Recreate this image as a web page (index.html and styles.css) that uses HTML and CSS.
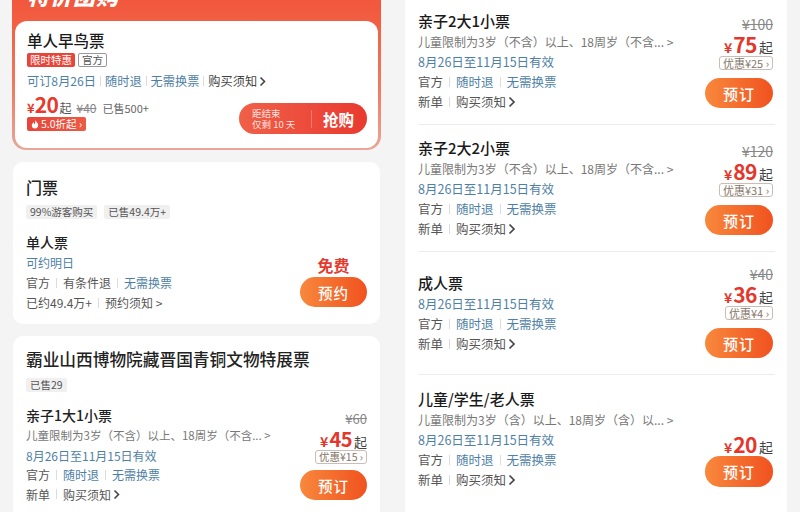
FILE: index.html
```html
<!DOCTYPE html>
<html lang="zh-CN">
<head>
<meta charset="utf-8">
<title>票务</title>
<link rel="stylesheet" href="styles.css">
</head>
<body>
<div class="page">
  <div class="col-left">
    <section class="promo">
      <div class="promo-head">特价团购</div>
      <div class="promo-card">
        <div class="p-title">单人早鸟票</div>
        <div class="tags">
          <span class="tag tag-red">限时特惠</span>
          <span class="tag tag-line">官方</span>
        </div>
        <div class="info info-p">
          <span class="blue">可订8月26日</span><span class="sep"></span><span class="blue">随时退</span><span class="sep"></span><span class="blue">无需换票</span><span class="sep"></span><span class="dark">购买须知</span><svg class="chev" width="7" height="11" viewBox="0 0 7 11"><path d="M1.5 1.5 L5.5 5.5 L1.5 9.5" fill="none" stroke="#444" stroke-width="1.6"/></svg>
        </div>
        <div class="promo-bottom">
          <div class="promo-left">
            <div class="pprice">
              <span class="yen">¥</span><span class="num">20</span><span class="qi">起</span>
              <span class="old">¥40</span>
              <span class="sold">已售500+</span>
            </div>
            <span class="discount"><svg width="8" height="10" viewBox="0 0 8 10"><path d="M4 0.5 C4.6 2.6 7.4 3.8 7.2 6.6 C7 8.6 5.6 9.6 4 9.6 C2.2 9.6 0.8 8.4 0.8 6.6 C0.8 5 2 4.2 2.4 3 C3 4 3.2 4.8 3 5.6 C4.4 4.6 4.6 2.6 4 0.5 Z" fill="#fff"/></svg>5.0折起 ›</span>
          </div>
          <div class="grab">
            <div class="grab-left"><span>距结束</span><span>仅剩 10 天</span></div>
            <div class="grab-div"></div>
            <div class="grab-text">抢购</div>
          </div>
        </div>
      </div>
    </section>

    <section class="card ticket-card">
      <div class="c-title">门票</div>
      <div class="tags tags-gap">
        <span class="tag tag-gray">99%游客购买</span>
        <span class="tag tag-gray">已售49.4万+</span>
      </div>
      <div class="c-body">
        <div class="c-left">
          <div class="sub-title">单人票</div>
          <div class="info info-l"><span class="blue">可约明日</span></div>
          <div class="info info-l"><span class="gray">官方</span><span class="sep"></span><span class="gray">有条件退</span><span class="sep"></span><span class="blue">无需换票</span></div>
          <div class="info info-l"><span class="gray">已约49.4万+</span><span class="sep"></span><span class="gray">预约须知 &gt;</span></div>
        </div>
        <div class="free-block">
          <div class="free">免费</div>
          <div class="btn btn-l">预约</div>
        </div>
      </div>
    </section>

    <section class="card ex-card">
      <div class="ex-title">霸业山西博物院藏晋国青铜文物特展票</div>
      <div class="tags tags-gap2">
        <span class="tag tag-gray">已售29</span>
      </div>
      <div class="c-body ex-body">
        <div class="c-left">
          <div class="sub-title">亲子1大1小票</div>
          <div class="info info-s lh"><span class="light">儿童限制为3岁（不含）以上、18周岁（不含... &gt;</span></div>
          <div class="info info-l lh"><span class="blue">8月26日至11月15日有效</span></div>
          <div class="info info-l lh"><span class="gray">官方</span><span class="sep"></span><span class="blue">随时退</span><span class="sep"></span><span class="blue">无需换票</span></div>
          <div class="info info-l lh"><span class="gray">新单</span><span class="sep"></span><span class="gray">购买须知</span><svg class="chev" width="7" height="11" viewBox="0 0 7 11"><path d="M1.5 1.5 L5.5 5.5 L1.5 9.5" fill="none" stroke="#444" stroke-width="1.6"/></svg></div>
        </div>
        <div class="price-block pb-l">
          <div class="strike s-l">¥60</div>
          <div class="price p-l"><span class="yen">¥</span><span class="num">45</span><span class="qi">起</span></div>
          <span class="coupon c-l">优惠¥15 ›</span>
          <div class="btn btn-l bl">预订</div>
        </div>
      </div>
    </section>
  </div>

  <div class="col-right">
    <div class="row">
      <div class="r-left">
        <div class="r-title">亲子2大1小票</div>
        <div class="info info-s"><span class="light">儿童限制为3岁（不含）以上、18周岁（不含... &gt;</span></div>
        <div class="info"><span class="blue">8月26日至11月15日有效</span></div>
        <div class="info"><span class="gray">官方</span><span class="sep"></span><span class="blue">随时退</span><span class="sep"></span><span class="blue">无需换票</span></div>
        <div class="info"><span class="gray">新单</span><span class="sep"></span><span class="gray">购买须知</span><svg class="chev" width="8" height="12" viewBox="0 0 8 12"><path d="M1.5 1.5 L6 6 L1.5 10.5" fill="none" stroke="#444" stroke-width="1.7"/></svg></div>
      </div>
      <div class="price-block">
        <div class="strike">¥100</div>
        <div class="price"><span class="yen">¥</span><span class="num">75</span><span class="qi">起</span></div>
        <span class="coupon">优惠¥25 ›</span>
        <div class="btn">预订</div>
      </div>
    </div>

    <div class="row">
      <div class="r-left">
        <div class="r-title">亲子2大2小票</div>
        <div class="info info-s"><span class="light">儿童限制为3岁（不含）以上、18周岁（不含... &gt;</span></div>
        <div class="info"><span class="blue">8月26日至11月15日有效</span></div>
        <div class="info"><span class="gray">官方</span><span class="sep"></span><span class="blue">随时退</span><span class="sep"></span><span class="blue">无需换票</span></div>
        <div class="info"><span class="gray">新单</span><span class="sep"></span><span class="gray">购买须知</span><svg class="chev" width="8" height="12" viewBox="0 0 8 12"><path d="M1.5 1.5 L6 6 L1.5 10.5" fill="none" stroke="#444" stroke-width="1.7"/></svg></div>
      </div>
      <div class="price-block">
        <div class="strike">¥120</div>
        <div class="price"><span class="yen">¥</span><span class="num">89</span><span class="qi">起</span></div>
        <span class="coupon">优惠¥31 ›</span>
        <div class="btn">预订</div>
      </div>
    </div>

    <div class="row row-short">
      <div class="r-left">
        <div class="r-title">成人票</div>
        <div class="info"><span class="blue">8月26日至11月15日有效</span></div>
        <div class="info"><span class="gray">官方</span><span class="sep"></span><span class="blue">随时退</span><span class="sep"></span><span class="blue">无需换票</span></div>
        <div class="info"><span class="gray">新单</span><span class="sep"></span><span class="gray">购买须知</span><svg class="chev" width="8" height="12" viewBox="0 0 8 12"><path d="M1.5 1.5 L6 6 L1.5 10.5" fill="none" stroke="#444" stroke-width="1.7"/></svg></div>
      </div>
      <div class="price-block">
        <div class="strike">¥40</div>
        <div class="price"><span class="yen">¥</span><span class="num">36</span><span class="qi">起</span></div>
        <span class="coupon">优惠¥4 ›</span>
        <div class="btn">预订</div>
      </div>
    </div>

    <div class="row row-last">
      <div class="r-left">
        <div class="r-title">儿童/学生/老人票</div>
        <div class="info info-s"><span class="light">儿童限制为3岁（含）以上、18周岁（含）以... &gt;</span></div>
        <div class="info"><span class="blue">8月26日至11月15日有效</span></div>
        <div class="info"><span class="gray">官方</span><span class="sep"></span><span class="blue">随时退</span><span class="sep"></span><span class="blue">无需换票</span></div>
        <div class="info"><span class="gray">新单</span><span class="sep"></span><span class="gray">购买须知</span><svg class="chev" width="8" height="12" viewBox="0 0 8 12"><path d="M1.5 1.5 L6 6 L1.5 10.5" fill="none" stroke="#444" stroke-width="1.7"/></svg></div>
      </div>
      <div class="price-block">
        <div class="price"><span class="yen">¥</span><span class="num">20</span><span class="qi">起</span></div>
        <div class="btn btn-tight">预订</div>
      </div>
    </div>
  </div>
</div>
</body>
</html>
```

FILE: styles.css
```css
* { box-sizing: border-box; }
html, body { margin: 0; padding: 0; }
body {
  width: 800px;
  height: 512px;
  overflow: hidden;
  background: #f4f4f4;
  font-family: "Noto Sans CJK SC", "Noto Sans", sans-serif;
  color: #222;
}
.page {
  display: flex;
  align-items: flex-start;
  height: 512px;
  overflow: hidden;
}
.col-left {
  width: 369px;
  margin-left: 12px;
  margin-top: -22px;
  display: flex;
  flex-direction: column;
}
.col-right {
  width: 382px;
  margin-left: 24px;
  margin-top: -2px;
  background: #fff;
  border-radius: 0 0 10px 10px;
  padding: 0 12px 40px 13px;
}

/* promo */
.promo {
  background: linear-gradient(180deg, #f1503a 0, #f25d40 40px, #f07a62 110px, #e9a597 170px);
  border-radius: 14px;
  padding: 0 3px 2px;
}
.promo-head {
  height: 43px;
  padding: 2px 0 0 12px;
  font-size: 22px;
  line-height: 30px;
  font-weight: 900;
  font-style: italic;
  color: #fff;
  letter-spacing: 1px;
}
.promo-card {
  background: #fff;
  border-radius: 12px;
  padding: 8px 11px 14px 12px;
}
.p-title {
  font-size: 15.5px;
  line-height: 22px;
  font-weight: 500;
  color: #1a1a1a;
}
.tags {
  display: flex;
  gap: 3px;
  height: 14px;
  margin-top: 2px;
}
.tag {
  display: inline-flex;
  align-items: center;
  height: 14px;
  padding: 0 3px;
  font-size: 10.5px;
  line-height: 14px;
  border-radius: 2px;
}
.tag-red { background: #e8453a; color: #fff; }
.tag-line { border: 1px solid #9a9a9a; color: #555; background: #fff; }
.tag-gray { background: #f0f0f0; color: #555; padding: 0 4px; }
.tags-gap { margin-top: 7px; gap: 7px; }
.tags-gap2 { margin-top: 8px; }

.info {
  display: flex;
  align-items: center;
  font-size: 12.5px;
  line-height: 20px;
  height: 20px;
  white-space: nowrap;
}
.info-s { font-size: 12px; }
.info-l { font-size: 12px; }
.c-left .info-s { font-size: 11.5px; }
.info.lh { height: 19.5px; line-height: 19.5px; }
.info-p { margin-top: 4px; font-size: 12.2px; }
.info-p .sep { margin: 0 4px; }
.blue { color: #4f7fa6; }
.gray { color: #555; }
.dark { color: #444; }
.light { color: #777; }
.sep {
  display: inline-block;
  width: 1px;
  height: 10px;
  background: #dcdcdc;
  margin: 0 6px;
}
.chev { margin-left: 2px; }

.promo-bottom {
  display: flex;
  justify-content: space-between;
  align-items: flex-end;
}
.promo-left {
  display: flex;
  flex-direction: column;
  align-items: flex-start;
  padding-bottom: 3px;
}
.pprice {
  display: flex;
  align-items: baseline;
  height: 24px;
  line-height: 24px;
  margin-top: 1px;
  margin-bottom: 1px;
  white-space: nowrap;
}
.pprice .yen { color: #e8392d; font-size: 13px; font-weight: 700; }
.pprice .num { color: #e8392d; font-size: 21px; font-weight: 700; letter-spacing: -0.5px; }
.pprice .qi { color: #555; font-size: 12px; margin-left: 1px; }
.pprice .old { color: #888; font-size: 12px; text-decoration: line-through; margin-left: 5px; }
.pprice .sold { color: #666; font-size: 11px; margin-left: 6px; }
.discount {
  display: flex;
  align-items: center;
  gap: 2px;
  height: 14px;
  padding: 0 4px;
  border-radius: 2px;
  background: linear-gradient(90deg, #e8453a, #ec5a44);
  color: #fff;
  font-size: 10.5px;
  line-height: 14px;
}
.grab {
  width: 128px;
  height: 31px;
  border-radius: 16px;
  background: linear-gradient(90deg, #f06048, #e93a30);
  display: flex;
  align-items: center;
  padding: 0 0 0 13px;
  color: #fff;
  white-space: nowrap;
}
.grab-left {
  display: flex;
  flex-direction: column;
  font-size: 9.5px;
  line-height: 11px;
  color: rgba(255,255,255,0.85);
  width: 53px;
}
.grab-div {
  width: 1px;
  height: 18px;
  background: rgba(255,255,255,0.25);
  margin: 0 11px 0 6px;
}
.grab-text {
  font-size: 15.5px;
  font-weight: 700;
}

/* cards */
.card {
  background: #fff;
  border-radius: 10px;
  margin: 12px 1px 0;
}
.ticket-card { padding: 14px 13px 11px 13px; }
.c-title {
  font-size: 16px;
  line-height: 22px;
  font-weight: 500;
}
.c-body {
  display: flex;
  justify-content: space-between;
  align-items: flex-end;
}
.sub-title {
  font-size: 14px;
  line-height: 22px;
  font-weight: 500;
  margin-top: 12px;
}
.free-block {
  display: flex;
  flex-direction: column;
  align-items: center;
  margin-bottom: 6px;
}
.free {
  font-size: 16px;
  line-height: 22px;
  font-weight: 700;
  color: #e33c2f;
  margin-bottom: 1px;
}
.btn {
  width: 68px;
  height: 30px;
  border-radius: 15px;
  background: linear-gradient(90deg, #f8883c, #f0521f);
  color: #fff;
  font-size: 15px;
  font-weight: 500;
  display: flex;
  align-items: center;
  justify-content: center;
  letter-spacing: 1px;
}
.btn-l { width: 67px; font-size: 14.5px; }
.ex-card { padding: 12px 13px 0; height: 200px; }
.ex-title {
  font-size: 16.7px;
  line-height: 22px;
  font-weight: 500;
  white-space: nowrap;
}
.ex-body .sub-title { margin-top: 0; }
.ex-body { margin-top: 12px; }

.price-block {
  display: flex;
  flex-direction: column;
  align-items: flex-end;
}
.pb-l { margin-bottom: 4px; }
.strike {
  font-size: 14px;
  line-height: 18px;
  color: #888;
  text-decoration: line-through;
}
.s-l { font-size: 13px; line-height: 16px; }
.price {
  display: flex;
  align-items: baseline;
  height: 23px;
  line-height: 23px;
  white-space: nowrap;
}
.price .yen { color: #e5362c; font-size: 14px; font-weight: 700; margin-right: 1px; }
.price .num { color: #e5362c; font-size: 21px; font-weight: 700; letter-spacing: -0.5px; }
.price .qi { color: #444; font-size: 14px; margin-left: 2px; }
.p-l .num { font-size: 20px; }
.p-l .qi { font-size: 13px; }
.coupon {
  display: inline-flex;
  align-items: center;
  height: 14px;
  margin-top: 0;
  padding: 0 3px;
  border: 1px solid #c9bdb5;
  border-radius: 3px;
  color: #857468;
  font-size: 11px;
  line-height: 12px;
}
.c-l { font-size: 10.5px; }
.price-block .btn { margin-top: 8px; }
.price-block .bl { margin-top: 6px; }
.price-block .btn-tight { margin-top: 0; height: 31px; }

/* right column rows */
.row {
  height: 127px;
  border-bottom: 1px solid #ececec;
  display: flex;
  justify-content: space-between;
  align-items: center;
  padding-right: 2px;
}
.row-short { height: 123px; }
.row-last { border-bottom: none; }
.row .price-block {
  align-self: flex-end;
  margin-bottom: 16px;
}
.row-last .price-block { margin-bottom: 15px; }
.r-left { display: flex; flex-direction: column; }
.r-title {
  font-size: 15px;
  line-height: 22px;
  font-weight: 500;
  color: #1a1a1a;
}
```
